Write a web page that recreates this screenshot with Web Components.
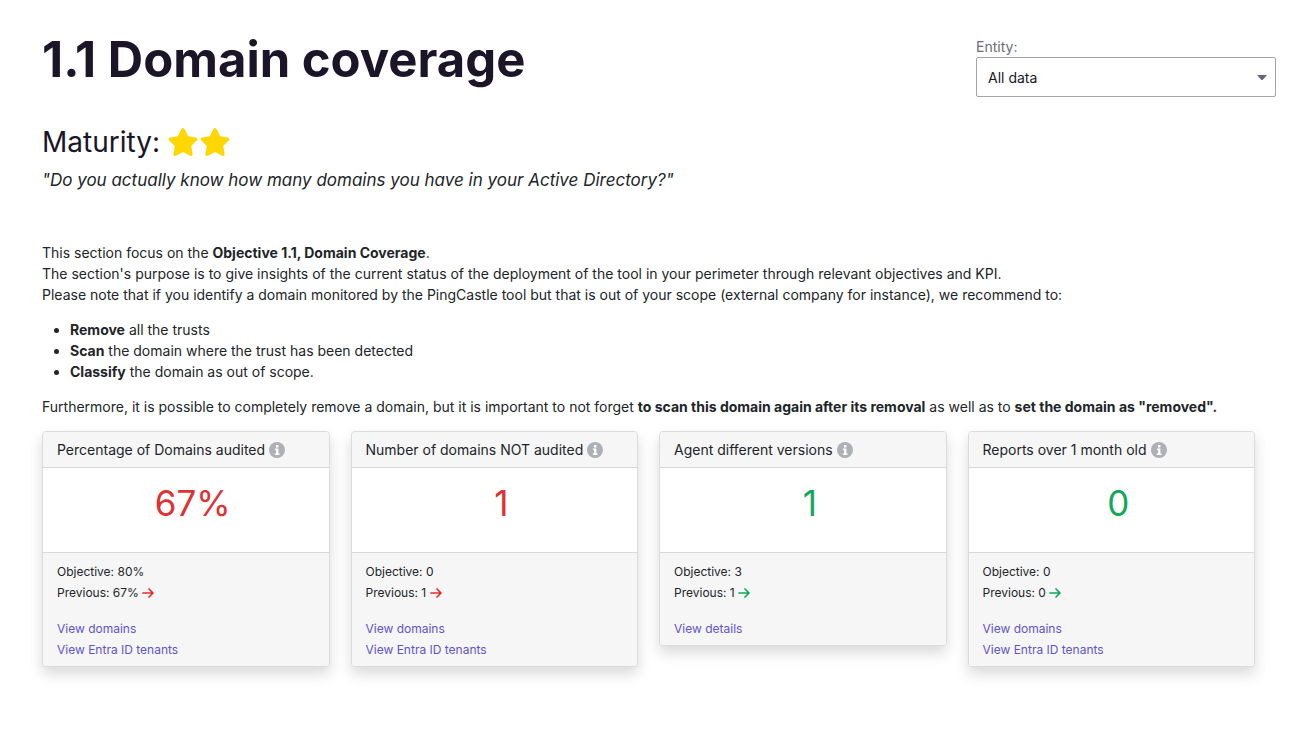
<!DOCTYPE html>
<html lang="en">
<head>
<meta charset="utf-8">
<meta name="viewport" content="width=device-width, initial-scale=1">
<title>1.1 Domain coverage</title>
<style>
  body { margin: 0; background: #fff; color: #212529; font: 14px/21px Inter, "Liberation Sans", sans-serif; }
</style>
</head>
<body>
<coverage-page></coverage-page>

<script>
(function() {
  'use strict';

  // attach an open shadow root and fill it
  function render(el, html) {
    el.attachShadow({mode: 'open'}).innerHTML = html;
  }

  customElements.define('star-rating', class extends HTMLElement {
    constructor() {
      super();
      const count = Number(this.getAttribute('value')) || 2;
      const star = '<svg viewBox="0 0 576 512" aria-hidden="true"><path d="M316.900 18C311.600 7 300.400 0 288.100 0s-23.400 7-28.800 18L195 150.300 51.400 171.500c-12 1.800-22 10.200-25.700 21.700s-.7 24.200 7.900 32.700L137.800 329 113.200 474.700c-2 12 3 24.200 12.900 31.300s23 8 33.800 2.300l128.300-68.500 128.300 68.500c10.800 5.700 23.900 4.900 33.800-2.300s14.900-19.300 12.900-31.300L438.500 329 542.700 225.900c8.600-8.500 11.700-21.200 7.900-32.700s-13.700-19.900-25.700-21.700L381.200 150.300 316.900 18z"/></svg>';
      render(this, `
      <style>
      :host { display: inline-flex; color: #ffd700; }
      svg { width: 32px; height: 28px; fill: currentColor; }
      </style>
      ${star.repeat(count)}`);
    }
  });

  customElements.define('info-icon', class extends HTMLElement {
    constructor() {
      super();
      render(this, `
      <style>
      :host { display: inline-flex; color: #adb1b6; }
      svg { width: 16px; height: 16px; }
      </style>
      <svg viewBox="0 0 16 16" aria-hidden="true">
        <circle cx="8" cy="8" r="8" fill="currentColor"/>
        <path fill="#fff" d="M7 3h2.400v2.400H7zM6 6.500h3.400v5h1.100V13H5.800v-1.500h1.300V8H6z"/>
      </svg>`);
    }
  });

  customElements.define('trend-arrow', class extends HTMLElement {
    constructor() {
      super();
      render(this, `
      <style>
      :host { display: inline-block; }
      svg { display: block; width: 12px; height: 12px; }
      </style>
      <svg viewBox="0 0 12 12" fill="none" stroke="currentColor" stroke-width="1.700" stroke-linecap="round" stroke-linejoin="round" aria-hidden="true">
        <path d="M1 6h10M7 2l4 4-4 4"/>
      </svg>`);
    }
  });

  customElements.define('entity-select', class extends HTMLElement {
    constructor() {
      super();
      render(this, `
      <style>
      :host { display: grid; width: 300px; }
      label { color: #6c6b78; line-height: 20px; }
      .field { display: grid; align-items: center; }
      .field > * { grid-area: 1 / 1; }
      select { appearance: none; width: 100%; height: 40px; padding: 0 32px 0 11px; border: 1px solid #a5a5a5; border-radius: 2px; background: #fff; color: #1a1628; font: inherit; }
      svg { justify-self: end; width: 10px; height: 5px; margin-right: 9px; fill: #666571; pointer-events: none; }
      </style>
      <label for="entity">Entity:</label>
      <div class="field">
        <select id="entity"><option>All data</option></select>
        <svg viewBox="0 0 10 5" aria-hidden="true"><path d="M1 0h8q1 0 .4.800L6 4.500q-1 1-2 0L.6.800Q0 0 1 0z"/></svg>
      </div>`);
    }
  });

  customElements.define('kpi-card', class extends HTMLElement {
    constructor() {
      super();
      const attr = name => this.getAttribute(name);
      render(this, `
      <style>
      :host { display: block; --tone: #e03131; border: 1px solid #dbdbdb; border-radius: 4px; background: #fff; box-shadow: 0 7px 14px rgba(0, 0, 0, .15); overflow: hidden; }
      :host([status="good"]) { --tone: #12a85a; }
      header { display: flex; align-items: center; gap: 4px; padding: 7px 14px; border-bottom: 1px solid #d8d8d8; background: #f6f6f6; }
      h2 { margin: 0; font-size: 14px; font-weight: 400; }
      .value { margin: 0; padding: 14px 14px 28px 28px; color: var(--tone); font-size: 35px; line-height: 42px; text-align: center; }
      footer { padding: 8px 14px 6px; border-top: 1px solid #d8d8d8; background: #f6f6f6; font-size: 12px; }
      p { margin: 0; }
      trend-arrow { color: var(--tone); vertical-align: -2px; }
      nav { display: grid; justify-items: start; margin-top: 15px; }
      ::slotted(a) { color: #6254cb; text-decoration: none; }
      </style>
      <header><h2>${attr('name')}</h2><info-icon></info-icon></header>
      <p class="value">${attr('value')}</p>
      <footer>
        <p>Objective: ${attr('objective')}</p>
        <p>Previous: ${attr('previous')} <trend-arrow></trend-arrow></p>
        <nav><slot></slot></nav>
      </footer>`);
    }
  });

  customElements.define('coverage-page', class extends HTMLElement {
    constructor() {
      super();
      render(this, `
      <style>
      :host { display: block; padding: 28px 42px; }
      .top { display: flex; justify-content: space-between; align-items: flex-start; margin-right: -21px; }
      h1 { margin: 0; color: #1a1628; font-size: 49px; font-weight: 700; line-height: 64px; }
      entity-select { margin-top: 9px; }
      .maturity { display: flex; align-items: center; gap: 7px; margin: 24px 0 0; color: #1a1628; font-size: 28px; line-height: 42px; }
      h2 { margin: 0; font: inherit; }
      .quote { margin: 3px 0 48px; font-size: 17px; line-height: 28px; font-style: italic; }
      p { margin: 0 0 14px; }
      ul { margin: 0 0 14px; padding-left: 28px; }
      .cards { display: grid; grid-template-columns: repeat(4, minmax(0, 1fr)); align-items: start; gap: 21px; }
      </style>
      <div class="top">
        <h1>1.1 Domain coverage</h1>
        <entity-select></entity-select>
      </div>
      <div class="maturity"><h2>Maturity:</h2><star-rating value="2"></star-rating></div>
      <p class="quote">"Do you actually know how many domains you have in your Active Directory?"</p>
      <p>This section focus on the <b>Objective 1.1, Domain Coverage</b>.<br>
      The section's purpose is to give insights of the current status of the deployment of the tool in your perimeter through relevant objectives and KPI.<br>
      Please note that if you identify a domain monitored by the PingCastle tool but that is out of your scope (external company for instance), we recommend to:</p>
      <ul>
        <li><b>Remove</b> all the trusts</li>
        <li><b>Scan</b> the domain where the trust has been detected</li>
        <li><b>Classify</b> the domain as out of scope.</li>
      </ul>
      <p>Furthermore, it is possible to completely remove a domain, but it is important to not forget <b>to scan this domain again after its removal</b> as well as to <b>set the domain as "removed".</b></p>
      <div class="cards">
        <kpi-card name="Percentage of Domains audited" value="67%" objective="80%" previous="67%">
          <a href="#domains">View domains</a>
          <a href="#tenants">View Entra ID tenants</a>
        </kpi-card>
        <kpi-card name="Number of domains NOT audited" value="1" objective="0" previous="1">
          <a href="#domains">View domains</a>
          <a href="#tenants">View Entra ID tenants</a>
        </kpi-card>
        <kpi-card status="good" name="Agent different versions" value="1" objective="3" previous="1">
          <a href="#details">View details</a>
        </kpi-card>
        <kpi-card status="good" name="Reports over 1 month old" value="0" objective="0" previous="0">
          <a href="#domains">View domains</a>
          <a href="#tenants">View Entra ID tenants</a>
        </kpi-card>
      </div>`);
    }
  });
}());
</script>
</body>
</html>
